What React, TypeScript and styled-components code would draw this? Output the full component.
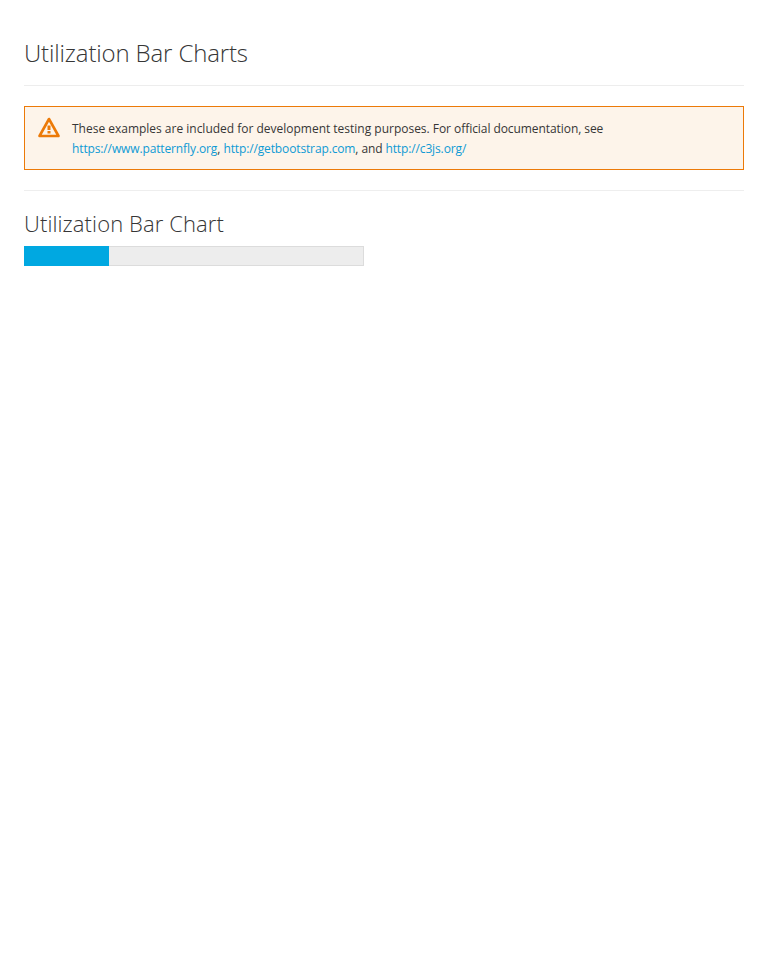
import React from "react";
import styled, { createGlobalStyle } from "styled-components";

const GlobalStyle = createGlobalStyle`
  *, *::before, *::after { box-sizing: border-box; }
  body {
    margin: 0;
    background: #fff;
    color: #363636;
    font-family: "Open Sans", Helvetica, Arial, sans-serif;
    font-size: 12px;
    line-height: 20px;
    font-feature-settings: "liga" 1;
  }
`;

const Container = styled.main`
  padding: 0 24px;
`;

const PageHeader = styled.header`
  margin: 40px 0 20px;
  padding-bottom: 19px;
  border-bottom: 1px solid #ededed;
`;

const PageTitle = styled.h1`
  margin: 0;
  font-size: 24px;
  font-weight: 300;
  line-height: 26px;
  letter-spacing: -0.14px;
`;

const Alert = styled.div`
  display: flex;
  margin-bottom: 20px;
  padding: 12px 13px 10px;
  border: 1px solid #ec7a08;
  background: #fdf4ea;
`;

const WarningIcon = styled.svg`
  flex: none;
  width: 22px;
  height: 22px;
  margin: -2px 12px 0 0;
`;

const Message = styled.p`
  margin: 0;
`;

const Phrase = styled.span<{ $tracking: number }>`
  letter-spacing: ${({ $tracking }) => $tracking}px;
`;

const Link = styled.a`
  color: #0f9ad4;
  text-decoration: none;
  letter-spacing: -0.13px;
`;

const Divider = styled.hr`
  margin: 20px 0;
  border: 0;
  border-top: 1px solid #eee;
`;

const ChartTitle = styled.h2`
  margin: 20px 0 11px;
  font-size: 22px;
  font-weight: 300;
  line-height: 24px;
  letter-spacing: 0.1px;
`;

const Track = styled.div`
  width: 340px;
  height: 20px;
  border: 1px solid #dcdcdc;
  background: #ededed;
`;

const Bar = styled.div`
  width: 85px;
  height: 20px;
  margin: -1px;
  background: #00a8e1;
`;

export default function App() {
  return (
    <>
      <GlobalStyle />
      <Container>
        <PageHeader>
          <PageTitle>Utilization Bar Charts</PageTitle>
        </PageHeader>
        <Alert>
          <WarningIcon viewBox="0 0 22 22" aria-hidden="true">
            <path d="M11 2 L20.5 19 H1.5 Z" fill="none" stroke="#ec7a08" strokeWidth="2.6" strokeLinejoin="round" />
            <path d="M9.5 8.5h3v4.5h-3z M9.5 14h3v2.4h-3z" fill="#ec7a08" />
          </WarningIcon>
          <Message>
            <Phrase $tracking={-0.01}>These examples are included for development testing purposes. </Phrase>
            <Phrase $tracking={-0.07}>For official documentation, see</Phrase>
            <br />
            <Link href="https://www.patternfly.org">https://www.patternfly.org</Link>,{" "}
            <Link href="http://getbootstrap.com">http://getbootstrap.com</Link>
            <Phrase $tracking={-0.1}>, and </Phrase>
            <Link href="http://c3js.org/">http://c3js.org/</Link>
          </Message>
        </Alert>
        <Divider />
        <ChartTitle>Utilization Bar Chart</ChartTitle>
        <Track>
          <Bar />
        </Track>
      </Container>
    </>
  );
}
